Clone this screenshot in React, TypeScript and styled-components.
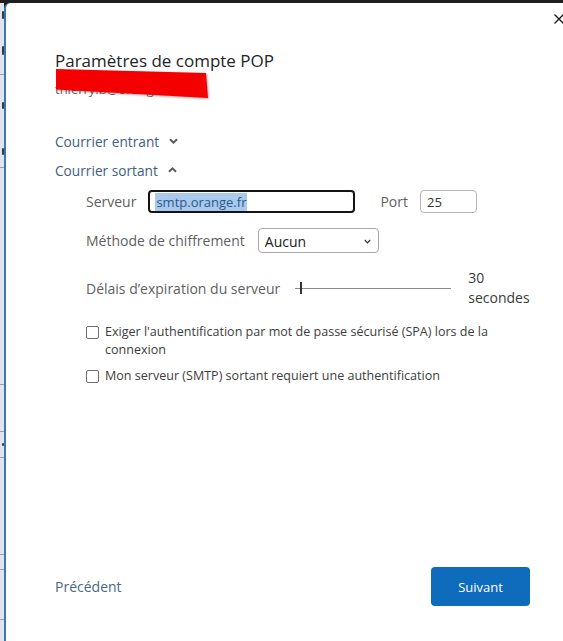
import React from "react";
import styled, { createGlobalStyle, css } from "styled-components";

const GlobalStyle = createGlobalStyle`
  html, body {
    margin: 0;
    padding: 0;
    background: #ffffff;
  }
  body {
    font-family: "Open Sans", "Noto Sans", "Liberation Sans", sans-serif;
    -webkit-font-smoothing: antialiased;
  }
`

const Screen = styled.div`
  width: 563px;
  height: 641px;
  display: flex;
  flex-direction: column;
  overflow: hidden;
  background: #1c1c1c;
`

const TopBar = styled.div`
  height: 3px;
  flex-shrink: 0;
  background: #1f1f1f;
`

const Workspace = styled.div`
  flex: 1;
  display: flex;
  min-height: 0;
`

const Backdrop = styled.div`
  width: 4px;
  flex-shrink: 0;
  background: #dfe5eb;
  display: flex;
  flex-direction: column;
  overflow: hidden;
`

interface CellProps {
    $h: number
    $line?: boolean
}

const BackCell = styled.div<CellProps>`
  height: ${props => props.$h}px;
  flex-shrink: 0;
  display: flex;
  justify-content: flex-end;
  align-items: center;
  box-sizing: border-box;
  ${props => props.$line && css`
    border-bottom: 1px solid #9aa3ad;
  `}
`

// clipped glyph fragments of the window behind the dialog
const Mark = styled.span<{ $h: number }>`
  width: 2px;
  height: ${props => props.$h}px;
  background: #3a3a3a;
  border-radius: 1px;
`

const Dialog = styled.div`
  flex: 1;
  background: #ffffff;
  border-left: 2px solid #3a78b8;
  border-top-left-radius: 6px;
  display: flex;
  flex-direction: column;
  padding: 11px 0 35px 49px;
  min-width: 0;
`

const CloseRow = styled.div`
  display: flex;
  justify-content: flex-end;
  height: 10px;
`

const CloseButton = styled.button`
  border: none;
  background: none;
  padding: 0;
  margin-right: -1px;
  width: 10px;
  height: 10px;
  display: flex;
  svg {
    display: block;
  }
`

const Header = styled.div`
  margin-top: 26px;
  display: flex;
  flex-direction: column;
`

const Title = styled.h1`
  margin: 0;
  font-size: 17px;
  line-height: 22px;
  font-weight: 400;
  color: #242424;
`

const AccountLine = styled.div`
  position: relative;
  height: 22px;
  margin-top: 6px;
  font-size: 13px;
  line-height: 22px;
  color: #666;
`

const Scribble = styled.svg`
  position: absolute;
  left: 1px;
  top: -9px;
  overflow: visible;
  filter: drop-shadow(1px 1px 1px rgba(80, 0, 0, 0.35));
`

const Sections = styled.div`
  margin-top: 31px;
  display: flex;
  flex-direction: column;
  gap: 9px;
`

const SectionToggle = styled.button`
  border: none;
  background: none;
  padding: 0;
  display: flex;
  align-items: center;
  gap: 10px;
  height: 20px;
  font-family: inherit;
  font-size: 13.7px;
  color: #41607f;
  cursor: pointer;
  svg {
    display: block;
  }
`

const Form = styled.div`
  margin-top: 10px;
  padding-left: 31px;
  display: flex;
  flex-direction: column;
`

const FieldRow = styled.div<{ $gap?: number }>`
  display: flex;
  align-items: center;
  gap: ${props => props.$gap ?? 12}px;
  margin-bottom: 15px;
`

const Label = styled.span`
  font-size: 14px;
  color: #5f5f5f;
  white-space: nowrap;
`

const PortLabel = styled(Label)`
  margin-left: 13px;
`

interface InputProps {
    $width: number
    $focused?: boolean
}

const TextInput = styled.div<InputProps>`
  width: ${props => props.$width}px;
  height: 23px;
  box-sizing: border-box;
  display: flex;
  align-items: center;
  padding: 0 6px;
  border-radius: 4px;
  font-size: 13px;
  color: #333;
  border: 1px solid #b5b5b5;
  ${props => props.$focused && css`
    border: 2px solid #141414;
    padding: 0 5px;
  `}
`

const Selected = styled.span`
  background: #a9c9ef;
  color: #2a5a8a;
  padding: 0 1px;
  line-height: 18px;
`

const Select = styled.div`
  width: 121px;
  height: 25px;
  box-sizing: border-box;
  border: 1px solid #a9a9a9;
  border-radius: 4px;
  display: flex;
  align-items: center;
  justify-content: space-between;
  padding: 2px 7px 0 6px;
  font-size: 14px;
  color: #222;
`

const SliderRow = styled.div`
  display: flex;
  align-items: center;
  margin-bottom: 15px;
`

const Slider = styled.div`
  margin-left: 15px;
  width: 156px;
  height: 14px;
  position: relative;
  display: flex;
  align-items: center;
`

const Track = styled.div`
  flex: 1;
  height: 1px;
  background: #8a8a8a;
`

const Thumb = styled.div`
  position: absolute;
  left: 5px;
  top: 1px;
  width: 2px;
  height: 12px;
  background: #333;
`

const SliderValue = styled.div`
  margin-left: 17px;
  width: min-content;
  font-size: 14px;
  line-height: 20px;
  color: #3a3a3a;
`

const CheckRow = styled.label`
  display: flex;
  align-items: flex-start;
  gap: 6px;
  margin-bottom: 8px;
  font-size: 12.55px;
  line-height: 18px;
  color: #3d3d3d;
  padding-right: 60px;
`

const Box = styled.span`
  flex-shrink: 0;
  width: 13px;
  height: 13px;
  box-sizing: border-box;
  margin-top: 3px;
  border: 1px solid #6e6e6e;
  border-radius: 2px;
  background: #fff;
`

const Footer = styled.div`
  margin-top: auto;
  display: flex;
  align-items: center;
  justify-content: space-between;
  padding-right: 33px;
`

const BackLink = styled.button`
  border: none;
  background: none;
  padding: 0;
  font-family: inherit;
  font-size: 14px;
  color: #4a6785;
`

const PrimaryButton = styled.button`
  width: 99px;
  height: 39px;
  border: none;
  border-radius: 4px;
  background: #0f6cbd;
  color: #fff;
  font-family: inherit;
  font-size: 13px;
`

const ChevronDown = () => (
    <svg width="9" height="6" viewBox="0 0 9 6">
        <path d="M1 1.2 L4.5 4.6 L8 1.2" fill="none" stroke="#5a5a5a" strokeWidth="2" />
    </svg>
)

const ChevronUp = () => (
    <svg width="9" height="6" viewBox="0 0 9 6">
        <path d="M1 4.8 L4.5 1.4 L8 4.8" fill="none" stroke="#5a5a5a" strokeWidth="2" />
    </svg>
)

const backCells: { h: number, mark?: number, line?: boolean }[] = [
    { h: 24, mark: 8 },
    { h: 48, mark: 9, line: true },
    { h: 60, mark: 7 },
    { h: 33, mark: 7, line: true },
    { h: 217, line: true },
    { h: 47, line: true },
    { h: 26, mark: 3, line: true },
    { h: 97, line: true },
    { h: 15, line: true },
    { h: 50, line: true },
]

export default function App() {
    return (
        <>
            <GlobalStyle />
            <Screen>
                <TopBar />
                <Workspace>
                    <Backdrop>
                        {backCells.map((c, i) => (
                            <BackCell key={i} $h={c.h} $line={c.line}>
                                {c.mark && <Mark $h={c.mark} />}
                            </BackCell>
                        ))}
                    </Backdrop>
                    <Dialog>
                        <CloseRow>
                            <CloseButton aria-label="Fermer">
                                <svg width="10" height="10" viewBox="0 0 10 10">
                                    <path d="M0.5 0.5 L9.5 9.5 M9.5 0.5 L0.5 9.5" stroke="#1a1a1a" strokeWidth="1.3" />
                                </svg>
                            </CloseButton>
                        </CloseRow>

                        <Header>
                            <Title>Paramètres de compte POP</Title>
                            <AccountLine>
                                thierry.b@orange.fr
                                <Scribble width="153" height="29" viewBox="0 0 153 29">
                                    <path d="M0 0 L150 4 L152 29 L0 20.5 Z" fill="#f50000" />
                                </Scribble>
                            </AccountLine>
                        </Header>

                        <Sections>
                            <SectionToggle>Courrier entrant <ChevronDown /></SectionToggle>
                            <SectionToggle>Courrier sortant <ChevronUp /></SectionToggle>
                        </Sections>

                        <Form>
                            <FieldRow>
                                <Label>Serveur</Label>
                                <TextInput $width={207} $focused>
                                    <Selected>smtp.orange.fr</Selected>
                                </TextInput>
                                <PortLabel>Port</PortLabel>
                                <TextInput $width={57}>25</TextInput>
                            </FieldRow>

                            <FieldRow $gap={13}>
                                <Label>Méthode de chiffrement</Label>
                                <Select>
                                    Aucun
                                    <svg width="7" height="5" viewBox="0 0 7 5">
                                        <path d="M0.8 1 L3.5 3.8 L6.2 1" fill="none" stroke="#333" strokeWidth="1.2" />
                                    </svg>
                                </Select>
                            </FieldRow>

                            <SliderRow>
                                <Label>Délais d’expiration du serveur</Label>
                                <Slider>
                                    <Track />
                                    <Thumb />
                                </Slider>
                                <SliderValue>30 secondes</SliderValue>
                            </SliderRow>

                            <CheckRow>
                                <Box />
                                <span>Exiger l'authentification par mot de passe sécurisé (SPA) lors de la connexion</span>
                            </CheckRow>
                            <CheckRow>
                                <Box />
                                <span>Mon serveur (SMTP) sortant requiert une authentification</span>
                            </CheckRow>
                        </Form>

                        <Footer>
                            <BackLink>Précédent</BackLink>
                            <PrimaryButton>Suivant</PrimaryButton>
                        </Footer>
                    </Dialog>
                </Workspace>
            </Screen>
        </>
    )
}
